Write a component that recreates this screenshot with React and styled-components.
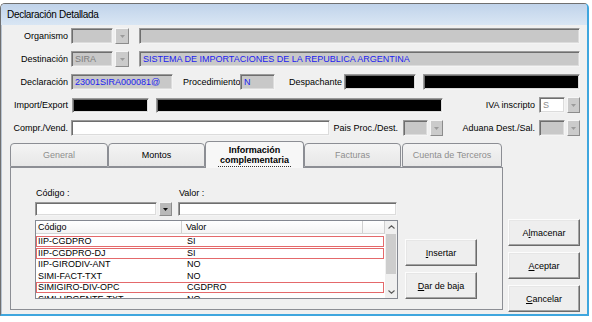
import React from "react";
import styled, { createGlobalStyle, css } from "styled-components";

const GlobalStyle = createGlobalStyle`
    html, body {
        margin: 0;
        padding: 0;
        background: #ffffff;
    }
    body {
        font-family: "Liberation Sans", Arial, sans-serif;
        font-size: 9px;
        color: #000;
    }
`;

const Window = styled.div`
    margin-top: 3px;
    width: 586px;
    height: 310px;
    border: 1px solid #707070;
    border-right: 2px solid #3fa6de;
    border-bottom: 2px solid #3fa6de;
    border-radius: 5px 5px 0 0;
    display: flex;
    flex-direction: column;
    overflow: hidden;
    background: #f0f0f0;
`;

const TitleBar = styled.div`
    height: 21px;
    line-height: 22px;
    padding-left: 6px;
    font-size: 10px;
    letter-spacing: -0.3px;
    background: linear-gradient(#c0d3ea, #d9e6f4);
    flex: none;
`;

const Client = styled.div`
    flex: 1;
    padding: 3px 0 0 1px;
    border-left: 1px solid #b8c4d2;
    display: flex;
    flex-direction: column;
`;

const FormRow = styled.div`
    display: flex;
    align-items: center;
    height: 16px;
    margin-top: ${({ $mt }) => $mt ?? 7}px;
`;

const Label = styled.span`
    flex: none;
    width: ${({ $w }) => $w}px;
    margin-left: ${({ $ml }) => $ml || 0}px;
    padding-left: ${({ $pl }) => $pl || 0}px;
    text-align: ${({ $left }) => ($left ? "left" : "right")};
    white-space: nowrap;
    line-height: 11px;
`;

const boxKinds = {
    disabled: css`
        background: #c8c8c8;
        color: #7e7e7e;
    `,
    white: css`
        background: #ffffff;
        color: #8a8a8a;
    `,
    black: css`
        background: #000000;
    `,
};

const TextBox = styled.div`
    flex: none;
    box-sizing: border-box;
    width: ${({ $w }) => $w}px;
    height: ${({ $h }) => $h || 16}px;
    margin-left: ${({ $ml }) => $ml || 0}px;
    border: 1px solid;
    border-color: #9a9a9a #f4f4f4 #f4f4f4 #9a9a9a;
    box-shadow: inset 1px 1px #6e6e6e, inset -1px -1px #dcdcdc;
    padding: 0 3px;
    line-height: 14px;
    white-space: nowrap;
    overflow: hidden;
    ${({ $kind }) => boxKinds[$kind || "disabled"]};
    ${({ $blue }) =>
        $blue &&
        css`
            color: #1c1cf0;
        `};
`;

const DropButton = styled.div`
    flex: none;
    box-sizing: border-box;
    width: ${({ $w }) => $w || 14}px;
    height: ${({ $h }) => $h || 16}px;
    margin-left: ${({ $ml }) => $ml || 0}px;
    border: 1px solid;
    border-color: #f6f6f6 #8c8c8c #8c8c8c #f6f6f6;
    background: ${({ $active }) => ($active ? "#b9b9b9" : "#cbcbcb")};
    display: flex;
    align-items: center;
    justify-content: center;
`;

const BottomArea = styled.div`
    display: flex;
    align-items: flex-end;
    margin-top: 5px;
    padding-left: 7px;
`;

const LeftCol = styled.div`
    width: 493px;
    margin-bottom: 2px;
    display: flex;
    flex-direction: column;
`;

const TabStrip = styled.div`
    display: flex;
    align-items: flex-end;
    height: 26px;
    position: relative;
    z-index: 1;
`;

const Tab = styled.div`
    flex: none;
    box-sizing: border-box;
    width: ${({ $w }) => $w}px;
    margin-left: ${({ $ml }) => $ml || 0}px;
    height: ${({ $active }) => ($active ? 27 : 24)}px;
    margin-bottom: ${({ $active }) => ($active ? -1 : 0)}px;
    border: 1px solid #8c8e94;
    border-bottom: ${({ $active }) => ($active ? "none" : "1px solid #8c8e94")};
    border-radius: 4px 4px 0 0;
    background: ${({ $active }) =>
        $active ? "#f7f7f7" : "linear-gradient(#f4f4f4, #e7e7e7)"};
    color: ${({ $disabled }) => ($disabled ? "#8e8e8e" : "#000")};
    font-weight: ${({ $active }) => ($active ? 700 : 400)};
    display: flex;
    align-items: center;
    justify-content: center;
    text-align: center;
    line-height: 10px;
`;

const FocusText = styled.span`
    display: inline-block;
    padding: 1px 2px 1px;
    border-bottom: 1px dotted #333;
    margin-top: 1px;
`;

const Panel = styled.div`
    box-sizing: border-box;
    height: 143px;
    border: 1px solid #8c8e94;
    background: #f0f0f0;
    padding: 20px 0 0 24px;
`;

const PanelLabels = styled.div`
    display: flex;
    height: 11px;
    align-items: center;
`;

const PanelInputs = styled.div`
    display: flex;
    margin-top: 3px;
`;

const ListArea = styled.div`
    display: flex;
    align-items: flex-end;
    margin-top: 4px;
`;

const ListView = styled.div`
    box-sizing: border-box;
    width: 363px;
    height: 79px;
    border: 1px solid #848891;
    background: #ffffff;
    display: flex;
    overflow: hidden;
`;

const ListBody = styled.div`
    width: 349px;
    flex: none;
`;

const HeaderRow = styled.div`
    display: flex;
    height: 13px;
    border-bottom: 1px solid #d5d5d5;
    background: linear-gradient(#ffffff, #f4f4f4);
    box-sizing: border-box;
`;

const HeaderCell = styled.div`
    box-sizing: border-box;
    width: ${({ $w }) => $w}px;
    border-right: 1px solid #d0d0d0;
    padding-left: ${({ $pl }) => $pl || 2}px;
    line-height: 12px;
`;

const Rows = styled.div`
    padding-top: 2px;
`;

const Row = styled.div`
    box-sizing: border-box;
    display: flex;
    width: 348px;
    height: 11px;
    margin-bottom: 0.5px;
    border: 1px solid ${({ $flag }) => ($flag ? "#e4696b" : "transparent")};
    line-height: 9px;
    white-space: nowrap;
`;

const Cell = styled.div`
    box-sizing: border-box;
    width: ${({ $w }) => $w}px;
    padding-left: 1px;
`;

const Scrollbar = styled.div`
    width: 12px;
    flex: none;
    background: #f0f0f0;
    display: flex;
    flex-direction: column;
`;

const ScrollArrow = styled.div`
    height: 12px;
    display: flex;
    align-items: center;
    justify-content: center;
    flex: none;
`;

const ScrollThumb = styled.div`
    height: 40px;
    margin: 1px 1px 0;
    background: #cdcdcd;
`;

const ScrollTrack = styled.div`
    flex: 1;
`;

const ButtonCol = styled.div`
    display: flex;
    flex-direction: column;
    gap: 6px;
    margin-left: ${({ $ml }) => $ml}px;
`;

const PushButton = styled.div`
    box-sizing: border-box;
    width: 72px;
    height: 27px;
    border: 1px solid;
    border-color: #fcfcfc #6b6b6b #6b6b6b #fcfcfc;
    box-shadow: inset -1px -1px #a3a3a3, inset 1px 1px #e6e6e6;
    background: #eeeeee;
    display: flex;
    align-items: center;
    justify-content: center;
    u {
        text-decoration: underline;
    }
`;

function Arrow({ color = "#9b9b9b" }) {
    return (
        <svg width="5" height="3" viewBox="0 0 5 3">
            <path d="M0 0h5L2.5 3z" fill={color} />
        </svg>
    );
}

function Chevron({ up }) {
    return (
        <svg width="7" height="4" viewBox="0 0 7 4">
            <path
                d={up ? "M0.5 3.5L3.5 0.8L6.5 3.5" : "M0.5 0.5L3.5 3.2L6.5 0.5"}
                stroke="#5a5a5a"
                strokeWidth="1.1"
                fill="none"
            />
        </svg>
    );
}

const items = [
    { code: "IIP-CGDPRO", value: "SI", flag: true },
    { code: "IIP-CGDPRO-DJ", value: "SI", flag: true },
    { code: "IIP-GIRODIV-ANT", value: "NO" },
    { code: "SIMI-FACT-TXT", value: "NO" },
    { code: "SIMIGIRO-DIV-OPC", value: "CGDPRO", flag: true },
    { code: "SIMI-URGENTE-TXT", value: "NO" },
];

export default function App() {
    return (
        <>
            <GlobalStyle />
            <Window>
                <TitleBar>Declaración Detallada</TitleBar>
                <Client>
                    <FormRow $mt={0}>
                        <Label $w={65}>Organismo</Label>
                        <TextBox $w={42} $ml={3} />
                        <DropButton $ml={2}>
                            <Arrow />
                        </DropButton>
                        <TextBox $w={441} $ml={10} />
                    </FormRow>
                    <FormRow>
                        <Label $w={65}>Destinación</Label>
                        <TextBox $w={42} $ml={3}>
                            SIRA
                        </TextBox>
                        <DropButton $ml={2}>
                            <Arrow />
                        </DropButton>
                        <TextBox $w={441} $ml={10} $blue>
                            SISTEMA DE IMPORTACIONES DE LA REPUBLICA ARGENTINA
                        </TextBox>
                    </FormRow>
                    <FormRow>
                        <Label $w={65}>Declaración</Label>
                        <TextBox $w={102} $ml={3} $blue>
                            23001SIRA000081@
                        </TextBox>
                        <Label $w={55} $ml={10}>
                            Procedimiento
                        </Label>
                        <TextBox $w={35} $ml={2} $blue>
                            N
                        </TextBox>
                        <Label $w={57} $ml={10}>
                            Despachante
                        </Label>
                        <TextBox $w={72} $ml={2} $kind="black" />
                        <TextBox $w={157} $ml={7} $kind="black" />
                    </FormRow>
                    <FormRow>
                        <Label $w={65}>Import/Export</Label>
                        <TextBox $w={77} $ml={4} $h={15} $kind="black" />
                        <TextBox $w={287} $ml={7} $h={15} $kind="black" />
                        <Label $w={92}>IVA inscripto</Label>
                        <TextBox $w={26} $ml={4} $kind="white">
                            S
                        </TextBox>
                        <DropButton $w={13} $ml={2}>
                            <Arrow />
                        </DropButton>
                    </FormRow>
                    <FormRow>
                        <Label $w={65}>Compr./Vend.</Label>
                        <TextBox $w={259} $ml={3} $kind="white" />
                        <Label $w={68}>Pais Proc./Dest.</Label>
                        <TextBox $w={25} $ml={5} />
                        <DropButton $w={13} $ml={2}>
                            <Arrow />
                        </DropButton>
                        <Label $w={92}>Aduana Dest./Sal.</Label>
                        <TextBox $w={26} $ml={4} />
                        <DropButton $w={13} $ml={2}>
                            <Arrow />
                        </DropButton>
                    </FormRow>
                    <BottomArea>
                        <LeftCol>
                            <TabStrip>
                                <Tab $w={98} $disabled>
                                    General
                                </Tab>
                                <Tab $w={97}>Montos</Tab>
                                <Tab $w={99} $active>
                                    <FocusText>
                                        Información
                                        <br />
                                        complementaria
                                    </FocusText>
                                </Tab>
                                <Tab $w={97} $disabled>
                                    Facturas
                                </Tab>
                                <Tab $w={100} $ml={1} $disabled>
                                    Cuenta de Terceros
                                </Tab>
                            </TabStrip>
                            <Panel>
                                <PanelLabels>
                                    <Label $w={143} $pl={1} $left>
                                        Código :
                                    </Label>
                                    <Label $w={60} $left>
                                        Valor :
                                    </Label>
                                </PanelLabels>
                                <PanelInputs>
                                    <TextBox $w={122} $h={14} $kind="white" />
                                    <DropButton $w={13} $h={14} $ml={2} $active>
                                        <Arrow color="#111" />
                                    </DropButton>
                                    <TextBox $w={219} $h={14} $ml={6} $kind="white" />
                                </PanelInputs>
                                <ListArea>
                                    <ListView>
                                        <ListBody>
                                            <HeaderRow>
                                                <HeaderCell $w={146}>Código</HeaderCell>
                                                <HeaderCell $w={181} $pl={4}>
                                                    Valor
                                                </HeaderCell>
                                                <HeaderCell $w={22} />
                                            </HeaderRow>
                                            <Rows>
                                                {items.map(item => (
                                                    <Row key={item.code} $flag={item.flag}>
                                                        <Cell $w={149}>{item.code}</Cell>
                                                        <Cell $w={180}>{item.value}</Cell>
                                                    </Row>
                                                ))}
                                            </Rows>
                                        </ListBody>
                                        <Scrollbar>
                                            <ScrollArrow>
                                                <Chevron up />
                                            </ScrollArrow>
                                            <ScrollThumb />
                                            <ScrollTrack />
                                            <ScrollArrow>
                                                <Chevron />
                                            </ScrollArrow>
                                        </Scrollbar>
                                    </ListView>
                                    <ButtonCol $ml={7}>
                                        <PushButton>
                                            <span>
                                                <u>I</u>nsertar
                                            </span>
                                        </PushButton>
                                        <PushButton>
                                            <span>
                                                <u>D</u>ar de baja
                                            </span>
                                        </PushButton>
                                    </ButtonCol>
                                </ListArea>
                            </Panel>
                        </LeftCol>
                        <ButtonCol $ml={5}>
                            <PushButton>
                                <span>
                                    A<u>l</u>macenar
                                </span>
                            </PushButton>
                            <PushButton>
                                <span>
                                    <u>A</u>ceptar
                                </span>
                            </PushButton>
                            <PushButton>
                                <span>
                                    <u>C</u>ancelar
                                </span>
                            </PushButton>
                        </ButtonCol>
                    </BottomArea>
                </Client>
            </Window>
        </>
    );
}
